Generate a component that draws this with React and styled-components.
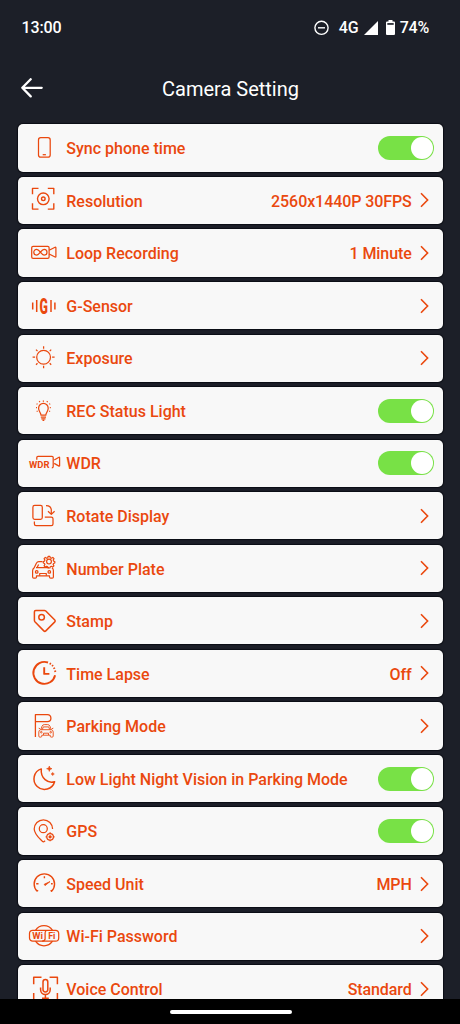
import React from 'react'
import styled, { createGlobalStyle } from 'styled-components'

function App() {
    return (
        <Screen>
            <GlobalStyle />

            <StatusBar>
                <Clock>13:00</Clock>
                <StatusIcons>
                    <DndIcon />
                    <Network>4G</Network>
                    <SignalIcon />
                    <BatteryIcon />
                    <Battery>74%</Battery>
                </StatusIcons>
            </StatusBar>

            <Header>
                <BackIcon />
                <Title>Camera Setting</Title>
            </Header>

            <List>
                {settings.map((item) => (
                    <Row key={item.label}>
                        <Icon viewBox="0 0 36 36" $stroke={item.stroke}>{item.icon}</Icon>
                        <Label>{item.label}</Label>
                        {item.value && <Value>{item.value}</Value>}
                        {item.toggle ? <Toggle><Knob /></Toggle> : <Chevron />}
                    </Row>
                ))}
            </List>

            <NavBar>
                <Handle />
            </NavBar>
        </Screen>
    )
}

export default App


/* ---- status and header icons ---- */

const DndIcon = () => (
    <svg width="16" height="16" viewBox="0 0 16 16" fill="none" stroke="#fff" strokeWidth="1.4">
        <circle cx="7.5" cy="7.8" r="6.6" />
        <path d="M4 7.8h7" />
    </svg>
)

const SignalIcon = () => (
    <Signal width="14" height="14" viewBox="0 0 14 14">
        <path d="M14 0v14H0z" fill="#fff" />
    </Signal>
)

const BatteryIcon = () => (
    <BatterySvg width="9" height="15" viewBox="0 0 9 15">
        <path d="M2.5 0h4v1.5H8q1 0 1 1V14q0 1-1 1H1q-1 0-1-1V2.5q0-1 1-1h1.5z" fill="#fff" />
        <path d="M1.3 3.1h6.4v1.7H1.3z" fill="#1c1f28" />
    </BatterySvg>
)

const BackIcon = () => (
    <svg width="22" height="20" viewBox="0 0 22 20" fill="none" stroke="#fff" strokeWidth="2.3" strokeLinecap="round" strokeLinejoin="round">
        <path d="M9.7 1.2 1.3 9.8l8.4 8.6M1.3 9.8h19.4" />
    </svg>
)

const Chevron = () => (
    <ChevronSvg width="9" height="16" viewBox="0 0 9 16">
        <path d="M1 1.3 7.6 8 1 14.7" />
    </ChevronSvg>
)


/* ---- row icons, all on a 36x36 grid ---- */

const IconText = styled.text`
fill:#ea480e;
stroke:none;
font-family:Roboto, sans-serif;
font-weight:${(props) => props.$weight || 700};
`

const phone = (
    <>
        <rect x="12.5" y="7.7" width="11.7" height="19.5" rx="2.2" />
        <path d="M16.7 24.7h3.2" />
    </>
)

const resolution = (
    <>
        <path d="M6.5 12.3V6.4h6M21.8 6.4h6v5.9M27.8 21.2v5.900h-6M12.5 27.1h-6v-5.9" />
        <circle cx="17.3" cy="16.8" r="5.8" />
        <circle cx="17.3" cy="16.8" r="1.8" />
    </>
)

const loop = (
    <>
        <rect x="5.7" y="11.3" width="17.4" height="12" rx="1.4" />
        <path d="M23.1 15.3l6-3q.8-.3.8.5v8.7q0 .8-.8.5l-6-3" />
        <path d="M14.4 17.2c-1.5-2-2.3-2.9-3.7-2.9a2.9 2.9 0 0 0 0 5.8c3 0 4.4-5.8 7.4-5.8a2.9 2.9 0 0 1 0 5.8c-1.4 0-2.2-.9-3.7-2.9z" />
    </>
)

const gsensor = (
    <>
        <path d="M6.7 14.6v7M10.7 12v12M25 12v12M28.9 14.6v7" strokeWidth="1.5" />
        <IconText $weight={900} x="13.6" y="26" fontSize="22.5" textLength="8.4" lengthAdjust="spacingAndGlyphs">G</IconText>
    </>
)

const exposure = (
    <>
        <circle cx="17.6" cy="17.2" r="6.9" />
        <path d="M17.6 6.2v2.5M17.6 25.7v2.5M6.6 17.2h2.5M26.1 17.2h2.5M10 9.6l1.5 1.5M23.7 23.3l1.5 1.5M10 24.8l1.5-1.5M23.7 11.1l1.5-1.5" />
    </>
)

const bulb = (
    <>
        <path d="M15 22.2c0-2.5-2.4-3.7-2.4-7a4.8 4.8 0 0 1 9.6 0c0 3.3-2.4 4.5-2.4 7z" />
        <path d="M14.8 24.2h5.2M15.3 25.9h4.2M16.5 27.3h1.8" />
        <path d="M17.4 7.5v1.2M13.3 8.1l.5 1M21.5 8.1l-.5 1M10.6 10.7l.9.6M24.2 10.7l-.9.6M10 14.7h1M23.8 14.7h1M10.7 18.5l.9-.5M24.1 18.5l-.9-.5" />
    </>
)

const wdr = (
    <>
        <path d="M10.8 14.8v-2.3q0-1.2 1.2-1.2h14q1.2 0 1.2 1.2v9q0 1.3-1.4 1.3M28.2 15l4.8-2.7q.6-.2.6.4v8q0 .6-.6.4l-4.8-2.7" />
        <IconText x="3.1" y="23.3" fontSize="9.3" textLength="20.5" lengthAdjust="spacingAndGlyphs">WDR</IconText>
    </>
)

const rotate = (
    <>
        <rect x="6.9" y="7.4" width="9.4" height="14" rx="1.8" />
        <path d="M8.4 23.4v2.5q0 1.7 1.7 1.7h15.2q1.7 0 1.7-1.7v-5.2q0-1.6-1.7-1.6h-6.5" />
        <path d="M20 7.5c3.6 0 5.3 1.7 5.3 4.7v4M22 13.2l3.3 3.2 3.3-3.2" />
    </>
)

const plate = (
    <>
        <path d="M16.5 11.6h-3.7q-1.6 0-2.3 1.5l-2.3 4.6q-1.6 1.2-1.6 3v6.2q0 1.2 1.2 1.2h1.5q1.2 0 1.2-1.2v-1.1h13v1.1q0 1.2 1.2 1.2h1.5q1.2 0 1.2-1.2v-6.2q0-1.8-1.4-2.9" />
        <path d="M10 17.6h13M12.6 14.5l-1.5 3M13.7 25.7v-2.2h6.6v2.2" />
        <circle cx="10.7" cy="21.9" r="1.3" />
        <circle cx="23.3" cy="21.9" r="1.3" />
        <circle cx="23" cy="11.6" r="2.4" />
        <path d="M22.1 6.3h1.8l.4 1.6 1 .4 1.5-.9 1.2 1.3-.8 1.4.4 1 1.2.4v1.5l-1.3.5-.4 1 .8 1.4-1.2 1.2-1.4-.8-1 .4-.4 1.3h-1.8l-.4-1.3-1-.4-1.4.8-1.2-1.2.8-1.4-.4-1-1.2-.5v-1.5l1.2-.4.4-1-.8-1.4 1.2-1.3 1.5.9 1-.4z" />
    </>
)

const stamp = (
    <>
        <path d="M9.8 7.400h8.600q.8 0 1.400.6l9 9q.9 1 0 1.900l-9 9q-1 1-2 0l-8.900-9.200q-.5-.6-.5-1.400V8.800q0-1.400 1.400-1.400z" />
        <circle cx="15.6" cy="14.3" r="2.8" />
    </>
)

const lapse = (
    <>
        <path d="M29.1 20.3A11 11 0 1 1 22 7.5" />
        <path d="M23.7 8.3l1.2.8M26.1 10.2l.9 1M27.9 12.6l.6 1.3M29.1 15.5l.2 1.5" />
        <path d="M18.2 12.2v6.7h5.2" />
    </>
)

const parking = (
    <>
        <path d="M9.4 29V6.7h12q3.5.2 3.5 3.5t-3.5 3.5H9.6" strokeWidth="1.3" />
        <path d="M14.8 21.7l1.2-3.4q.6-1.7 2.3-1.7h3.4q1.7 0 2.3 1.7l1.2 3.4M14.5 21.7h11q1.7.5 1.700 2.400v4q0 1-1 1h-1q-1 0-1-1v-.9h-8.400v.9q0 1-1 1h-1q-1 0-1-1v-4q0-1.900 1.700-2.400zM16.300 21.500l1-2.600h5.400l1 2.600M17.500 27v-1.800h5V27M12.700 20.200l1.400.5M27.300 20.200l-1.400.5" />
        <circle cx="15.3" cy="24.2" r=".8" />
        <circle cx="24.7" cy="24.2" r=".8" />
    </>
)

const moon = (
    <>
        <path d="M15.3 7.9A10.5 10.5 0 1 0 28.6 20.7C22 22.8 14.3 17.5 15.3 7.9z" />
        <path d="M23.3 5l.7 2 2 .7-2 .7-.7 2-.7-2-2-.7 2-.7zM26.7 11.4l.4 1.2 1.2.4-1.2.4-.4 1.2-.4-1.2-1.2-.4 1.2-.4z" fill="#ea480e" strokeWidth=".6" />
    </>
)

const gps = (
    <>
        <path d="M26.6 16a9.2 9.2 0 1 0-18.4 0c0 5 5.4 9.6 8.1 12.3q1.1 1 2.2 0l.6-.6" />
        <circle cx="17.3" cy="15.7" r="4" />
        <circle cx="24.1" cy="23.8" r="3.3" />
        <circle cx="24.1" cy="23.8" r="1" fill="#ea480e" />
        <path d="M24.1 19.3v1.2M24.1 27.1v1.2M19.6 23.8h1.2M27.4 23.8h1.2" />
    </>
)

const speed = (
    <>
        <path d="M11.1 25.2a10.2 10.2 0 1 1 14.5 0l-.9-1M11.1 25.2l.9-1" />
        <path d="M18.4 10.2v2M10.2 17.7h2.3M25 17.7h1.7" />
        <path d="M18.2 18.3l5.8-2.7-5 4z" fill="#ea480e" strokeWidth=".8" />
    </>
)

const wifi = (
    <>
        <path d="M9.5 12.3a10.2 10.2 0 0 1 17 0M9.5 23.2a10.2 10.2 0 0 0 17 0" />
        <rect x="3.5" y="12.3" width="29.2" height="10.9" rx="3.2" />
        <path d="M20.7 12.500q-1.600.3-1.600 2.200v6q0 2.200-3 2.400" />
        <IconText x="6.2" y="20.7" fontSize="8.2" textLength="10.7" lengthAdjust="spacingAndGlyphs">Wi</IconText>
        <IconText x="22.2" y="20.7" fontSize="8.2" textLength="7.2" lengthAdjust="spacingAndGlyphs">Fi</IconText>
    </>
)

const voice = (
    <>
        <path d="M7.7 13.3V6.3h7.8M23.6 6.3h7.8v7M31.4 22v7.5h-7.8M7.7 22v7.5h7.8" />
        <rect x="17" y="8.5" width="4.8" height="12.4" rx="2.4" />
        <path d="M14.6 16.6v2.2a4.8 4.8 0 0 0 9.6 0v-2.2M19.4 23.7v3.3M16 27.3h6.8" />
    </>
)

const settings = [
    { label: 'Sync phone time', icon: phone, toggle: true },
    { label: 'Resolution', icon: resolution, value: '2560x1440P 30FPS', stroke: 1.4 },
    { label: 'Loop Recording', icon: loop, value: '1 Minute' },
    { label: 'G-Sensor', icon: gsensor },
    { label: 'Exposure', icon: exposure },
    { label: 'REC Status Light', icon: bulb, toggle: true },
    { label: 'WDR', icon: wdr, toggle: true },
    { label: 'Rotate Display', icon: rotate },
    { label: 'Number Plate', icon: plate, stroke: 1.2 },
    { label: 'Stamp', icon: stamp, stroke: 1.5 },
    { label: 'Time Lapse', icon: lapse, value: 'Off', stroke: 1.9 },
    { label: 'Parking Mode', icon: parking, stroke: 0.9 },
    { label: 'Low Light Night Vision in Parking Mode', icon: moon, toggle: true, stroke: 1.5 },
    { label: 'GPS', icon: gps, toggle: true },
    { label: 'Speed Unit', icon: speed, value: 'MPH', stroke: 1.4 },
    { label: 'Wi-Fi Password', icon: wifi },
    { label: 'Voice Control', icon: voice, value: 'Standard', stroke: 1.5 },
]


const GlobalStyle = createGlobalStyle`
* {
    box-sizing: border-box;
}

body {
    margin: 0;
    background: #1c1f28;
    font-family: Roboto, "Liberation Sans", sans-serif;
}
`

const Screen = styled.div`
display:flex;
flex-direction:column;
width:460px;
height:1024px;
overflow:hidden;
background:#1c1f28;
color:#fff;
`

const StatusBar = styled.div`
display:flex;
justify-content:space-between;
align-items:center;
height:55px;
flex-shrink:0;
padding:0 31px 0 21.5px;
font-size:16px;
font-weight:500;
`

const Clock = styled.span`
letter-spacing:-0.1px;
`

const StatusIcons = styled.div`
display:flex;
align-items:center;
`

const Network = styled.span`
margin-left:9px;
`

const Signal = styled.svg`
margin-left:5.5px;
`

const BatterySvg = styled.svg`
margin:0 4.5px 0 8px;
`

const Battery = styled.span`
letter-spacing:-0.2px;
`

const Header = styled.header`
display:grid;
grid-template-columns:22px 1fr 22px;
align-items:center;
height:66px;
flex-shrink:0;
padding:0 21px;
`

const Title = styled.h1`
margin:1px 0 0 1px;
font-size:20px;
font-weight:400;
text-align:center;
`

const List = styled.main`
flex:1;
min-height:0;
overflow:hidden;
display:flex;
flex-direction:column;
gap:5.36px;
padding:3.35px 16.8px 0 18px;
`

const Row = styled.div`
display:flex;
align-items:center;
flex-shrink:0;
height:47.2px;
padding:0 9px 0 8px;
border-radius:5px;
background:#f8f8f8;
box-shadow:0 0 1px 1px #0b0d14;
color:#ea480e;
font-size:16px;
font-weight:500;
`

const Icon = styled.svg`
width:36px;
height:36px;
flex-shrink:0;
margin-right:4.3px;
fill:none;
stroke:#ea480e;
stroke-width:${(props) => props.$stroke || 1.25};
stroke-linejoin:round;
`

const Label = styled.span`
flex:1;
padding-top:1.5px;
white-space:nowrap;
`

const Value = styled.span`
margin-right:8.5px;
padding-top:1.5px;
letter-spacing:-0.08px;
`

const ChevronSvg = styled.svg`
margin-right:5px;
fill:none;
stroke:#ea480e;
stroke-width:1.6;
`

const Toggle = styled.div`
display:flex;
justify-content:flex-end;
align-items:center;
width:56px;
height:24px;
padding-right:1px;
border-radius:12px;
background:#78e146;
`

const Knob = styled.div`
width:22px;
height:22px;
border-radius:50%;
background:#fff;
`

const NavBar = styled.div`
display:flex;
align-items:center;
justify-content:center;
height:25px;
flex-shrink:0;
background:#000;
`

const Handle = styled.div`
width:122px;
height:4px;
margin:1px 0 0 1px;
border-radius:2px;
background:#fff;
`
